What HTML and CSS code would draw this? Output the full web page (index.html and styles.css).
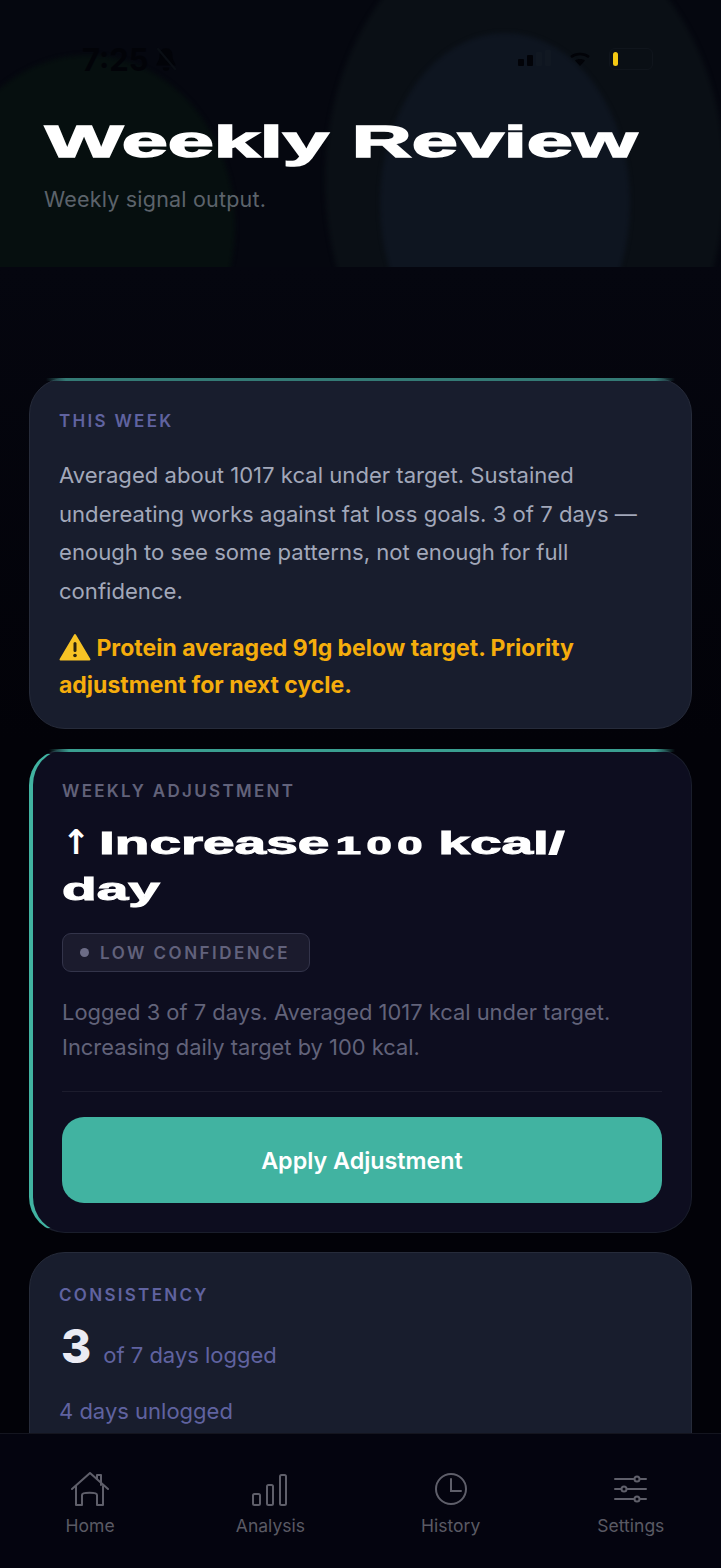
FILE: index.html
```html
<!DOCTYPE html>
<html lang="en">

<head>
    <meta charset="UTF-8">
    <meta name="viewport" content="width=device-width, initial-scale=1.0">
    <title>Weekly Review</title>
    <link rel="stylesheet" href="styles.css">
</head>

<body>
    <div class="screen">
        <div class="scroll">
            <header class="hero">
                <div class="blob blob-green"></div>
                <div class="blob blob-wide"></div>
                <div class="blob blob-blue"></div>

                <div class="status-bar">
                    <div class="status-left">
                        <span class="clock">7:25</span>
                        <svg class="bell" width="28" height="28" viewBox="0 0 26 26">
                            <path d="M13 3c-4 0-6 3-6 7 0 5-3 7-3 9h18c0-2-3-4-3-9 0-4-2-7-6-7z" fill="#020308" />
                            <path d="M10 21a3 3 0 0 0 6 0z" fill="#020308" />
                            <path d="M5 3l17 20" stroke="#0a0e14" stroke-width="2" />
                        </svg>
                    </div>
                    <div class="status-right">
                        <svg width="34" height="18" viewBox="0 0 34 18">
                            <rect x="1" y="9" width="6" height="7" rx="1" fill="#020308" />
                            <rect x="10" y="5" width="6" height="11" rx="1" fill="#020308" />
                            <rect x="19" y="2" width="6" height="14" rx="1" fill="#111822" />
                            <rect x="28" y="0" width="6" height="16" rx="1" fill="#111822" />
                        </svg>
                        <svg class="wifi" width="22" height="16" viewBox="0 0 22 16">
                            <path d="M2 6c5-4 13-4 18 0" stroke="#020308" stroke-width="2.4" fill="none" />
                            <path d="M6 9.500c3-2 7-2 10 0L11 15z" fill="#020308" />
                        </svg>
                        <div class="battery"><span class="battery-level"></span></div>
                    </div>
                </div>

                <h1 class="page-title"><span>Weekly Review</span></h1>
                <p class="page-sub">Weekly signal output.</p>
            </header>

            <main class="cards">
                <section class="card card-week">
                    <div class="label">THIS WEEK</div>
                    <p class="summary">Averaged about 1017 kcal under target. Sustained undereating works against fat loss goals. 3 of 7 days — enough to see some patterns, not enough for full confidence.</p>
                    <p class="warning"><svg class="warn-icon" width="32" height="28" viewBox="0 0 32 28">
                            <path d="M16 2L30.500 26.500H1.500z" fill="#f7c325" stroke="#f7c325" stroke-width="2" stroke-linejoin="round" />
                            <rect x="14.500" y="9" width="3" height="10" rx="1.500" fill="#2b2410" />
                            <circle cx="16" cy="22.500" r="1.800" fill="#2b2410" />
                        </svg> Protein averaged 91g below target. Priority adjustment for next cycle.</p>
                </section>

                <section class="card card-adjust">
                    <div class="label label-muted">WEEKLY ADJUSTMENT</div>
                    <h2 class="adjust-title"><span class="arrow">↑</span> <span class="wide">Increase <span class="small-num">100</span> kcal/</span><br><span class="wide">day</span></h2>
                    <div class="badge"><span class="dot"></span>LOW CONFIDENCE</div>
                    <p class="adjust-text">Logged 3 of 7 days. Averaged 1017 kcal under target. Increasing daily target by 100 kcal.</p>
                    <div class="divider"></div>
                    <button class="apply-btn" type="button">Apply Adjustment</button>
                </section>

                <section class="card card-consistency">
                    <div class="label">CONSISTENCY</div>
                    <div class="days-row"><span class="days-num">3</span><span class="days-text">of 7 days logged</span></div>
                    <p class="days-text days-note">4 days unlogged</p>
                </section>
            </main>
        </div>

        <nav class="tabbar">
            <a class="tab">
                <svg width="40" height="36" viewBox="0 0 40 36" fill="none" stroke="#5f5f6a" stroke-width="2" stroke-linejoin="round" stroke-linecap="round">
                    <path d="M2 17L20 1 38 17" />
                    <path d="M27 7V3h4v10" />
                    <path d="M6 14v19h6V23c0-3 15-3 15 0v10h6V14" />
                </svg>
                <span>Home</span>
            </a>
            <a class="tab">
                <svg width="40" height="36" viewBox="0 0 40 36" fill="none" stroke="#5f5f6a" stroke-width="2">
                    <rect x="3" y="22" width="7" height="11" rx="1.500" />
                    <rect x="17" y="13" width="6" height="20" rx="1.500" />
                    <rect x="30" y="3" width="6" height="30" rx="1.500" />
                </svg>
                <span>Analysis</span>
            </a>
            <a class="tab">
                <svg width="40" height="36" viewBox="0 0 40 36" fill="none" stroke="#5f5f6a" stroke-width="2" stroke-linecap="round">
                    <circle cx="20" cy="17" r="15" />
                    <path d="M20 7V19H30" />
                </svg>
                <span>History</span>
            </a>
            <a class="tab">
                <svg width="40" height="36" viewBox="0 0 40 36" fill="none" stroke="#5f5f6a" stroke-width="2">
                    <path d="M4 7h31M4 17h31M4 27h31" stroke-linecap="round" />
                    <circle cx="26" cy="7" r="2.500" fill="#04040f" />
                    <circle cx="13" cy="17" r="2.500" fill="#04040f" />
                    <circle cx="26" cy="27" r="2.500" fill="#04040f" />
                </svg>
                <span>Settings</span>
            </a>
        </nav>
    </div>
</body>

</html>
```
FILE: styles.css
```css
* {
    box-sizing: border-box;
}

body {
    margin: 0;
    background-color: #03040c;
    font-family: Inter, "Noto Sans", sans-serif;
}

.screen {
    width: 721px;
    height: 1568px;
    display: flex;
    flex-direction: column;
    overflow: hidden;
}

.scroll {
    height: 1433px;
    overflow: hidden;
    flex: none;
    background: linear-gradient(#05060f 267px, #020208 740px);
}

/* header */
.hero {
    position: relative;
    height: 267px;
    padding: 45px 45px 0;
    overflow: hidden;
    background-color: #05070f;
}

.blob {
    position: absolute;
    border-radius: 50%;
    filter: blur(2px);
}

.blob-green {
    left: -60px;
    top: 55px;
    width: 295px;
    height: 340px;
    background-color: #060f0f;
}

.blob-wide {
    left: 325px;
    top: -80px;
    width: 400px;
    height: 520px;
    background-color: #0a0f15;
}

.blob-blue {
    left: 380px;
    top: 33px;
    width: 250px;
    height: 340px;
    background-color: #0e1520;
}

.status-bar {
    position: relative;
    display: flex;
    justify-content: space-between;
    align-items: center;
    height: 28px;
    padding: 0 0 0 37px;
}

.status-left {
    display: flex;
    align-items: center;
    gap: 3px;
}

.clock {
    font-size: 31px;
    font-weight: 700;
    color: #020308;
}

.status-right {
    display: flex;
    align-items: center;
    gap: 18px;
    margin-right: 23px;
}

.battery {
    width: 44px;
    height: 22px;
    padding: 3px 3px;
    border: 1px solid #10151c;
    border-radius: 6px;
}

.battery-level {
    display: block;
    width: 5px;
    height: 14px;
    border-radius: 3px;
    background-color: #f4c913;
}

.page-title {
    position: relative;
    margin: 38px 0 0;
    height: 62px;
    font-family: "Liberation Sans", sans-serif;
    font-size: 45px;
    font-weight: 700;
    line-height: 62px;
    color: #fff;
    white-space: nowrap;
}

.page-title span {
    display: inline-block;
    transform: scaleX(1.84);
    transform-origin: left center;
    -webkit-text-stroke: 1.5px #fff;
}

.page-sub {
    position: relative;
    margin: 13px 0 0 -1px;
    font-size: 21.500px;
    letter-spacing: 0.200px;
    color: #5c636b;
}

/* cards */
.cards {
    display: flex;
    flex-direction: column;
    gap: 20px;
    padding: 111px 29px 0;
}

.card {
    position: relative;
    border: 1px solid #262b3a;
    border-radius: 36px;
    background-color: #181d2d;
}

/* teal line along the straight part of the top edge */
.card-week::before,
.card-adjust::before {
    content: "";
    position: absolute;
    top: -1px;
    left: 16px;
    right: 16px;
    height: 3px;
    background: linear-gradient(90deg, transparent, #347a75 20px, #347a75 calc(100% - 20px), transparent);
}

.card-week {
    height: 351px;
    padding: 31px 29px 0;
}

.card-adjust {
    height: 484px;
    padding: 30px 29px 0;
    border-color: #1a1e2c;
    border-left: 4px solid #41b3a1;
    background-color: #0d0d1f;
}

.card-adjust::before {
    background: linear-gradient(90deg, transparent, #3a9e90 20px, #3a9e90 calc(100% - 20px), transparent);
}

.card-consistency {
    height: 300px;
    margin-top: -1px;
    padding: 31px 29px 0;
}

.label {
    font-size: 17px;
    font-weight: 600;
    line-height: 22px;
    letter-spacing: 2.300px;
    color: #6063a0;
}

.label-muted {
    color: #62627a;
}

.summary {
    margin: 24px 0 0;
    font-size: 22.100px;
    line-height: 38.500px;
    color: #a2a8ba;
}

.warning {
    margin: 20px 0 0;
    font-size: 23px;
    font-weight: 700;
    line-height: 37px;
    color: #f5ad0c;
}

.warn-icon {
    vertical-align: -5px;
}

.adjust-title {
    margin: 20px 0 0;
    height: 90px;
    font-family: "Liberation Sans", sans-serif;
    font-size: 31px;
    font-weight: 700;
    line-height: 44px;
    color: #fff;
    white-space: nowrap;
}

.adjust-title .wide {
    display: inline-block;
    transform: scaleX(1.83);
    transform-origin: left center;
    -webkit-text-stroke: 1px #fff;
}

.small-num {
    margin: 0 -3px 0 -5px;
    font-size: 0.800em;
    letter-spacing: 3px;
}

.arrow {
    font-family: "DejaVu Sans", sans-serif;
    font-size: 34px;
    font-weight: 700;
    line-height: 0;
}

.badge {
    display: inline-flex;
    align-items: center;
    height: 39px;
    margin-top: 21px;
    padding: 0 19px 0 17px;
    border: 1px solid #33344a;
    border-radius: 9px;
    background-color: #1b1b2d;
    font-size: 17px;
    font-weight: 600;
    letter-spacing: 2.500px;
    color: #62627c;
}

.dot {
    width: 9px;
    height: 9px;
    margin-right: 11px;
    border-radius: 50%;
    background-color: #6c6c86;
}

.adjust-text {
    margin: 23px 0 0;
    font-size: 21.900px;
    line-height: 35px;
    color: #62637a;
}

.divider {
    height: 1px;
    margin-top: 26px;
    background-color: #1c1c2d;
}

.apply-btn {
    display: block;
    width: 100%;
    height: 86px;
    margin-top: 25px;
    border: none;
    border-radius: 22px;
    background-color: #41b3a1;
    font-family: Inter, sans-serif;
    font-size: 23.300px;
    font-weight: 600;
    color: #fff;
}

.days-row {
    display: flex;
    align-items: baseline;
    height: 54px;
    margin-top: 13px;
}

.days-num {
    margin: 0 12px 0 2px;
    font-size: 46px;
    line-height: 54px;
    font-weight: 800;
    color: #ebebf3;
}

.days-text {
    font-size: 22px;
    color: #6063a0;
}

.days-note {
    margin: 25px 0 0;
}

/* bottom nav */
.tabbar {
    display: flex;
    flex: none;
    height: 135px;
    padding: 38px 0 0;
    border-top: 1px solid #14151f;
    background-color: #04040f;
}

.tab {
    flex: 1;
    display: flex;
    flex-direction: column;
    align-items: center;
    gap: 7px;
    font-size: 17.500px;
    color: #5a5a64;
}
```
